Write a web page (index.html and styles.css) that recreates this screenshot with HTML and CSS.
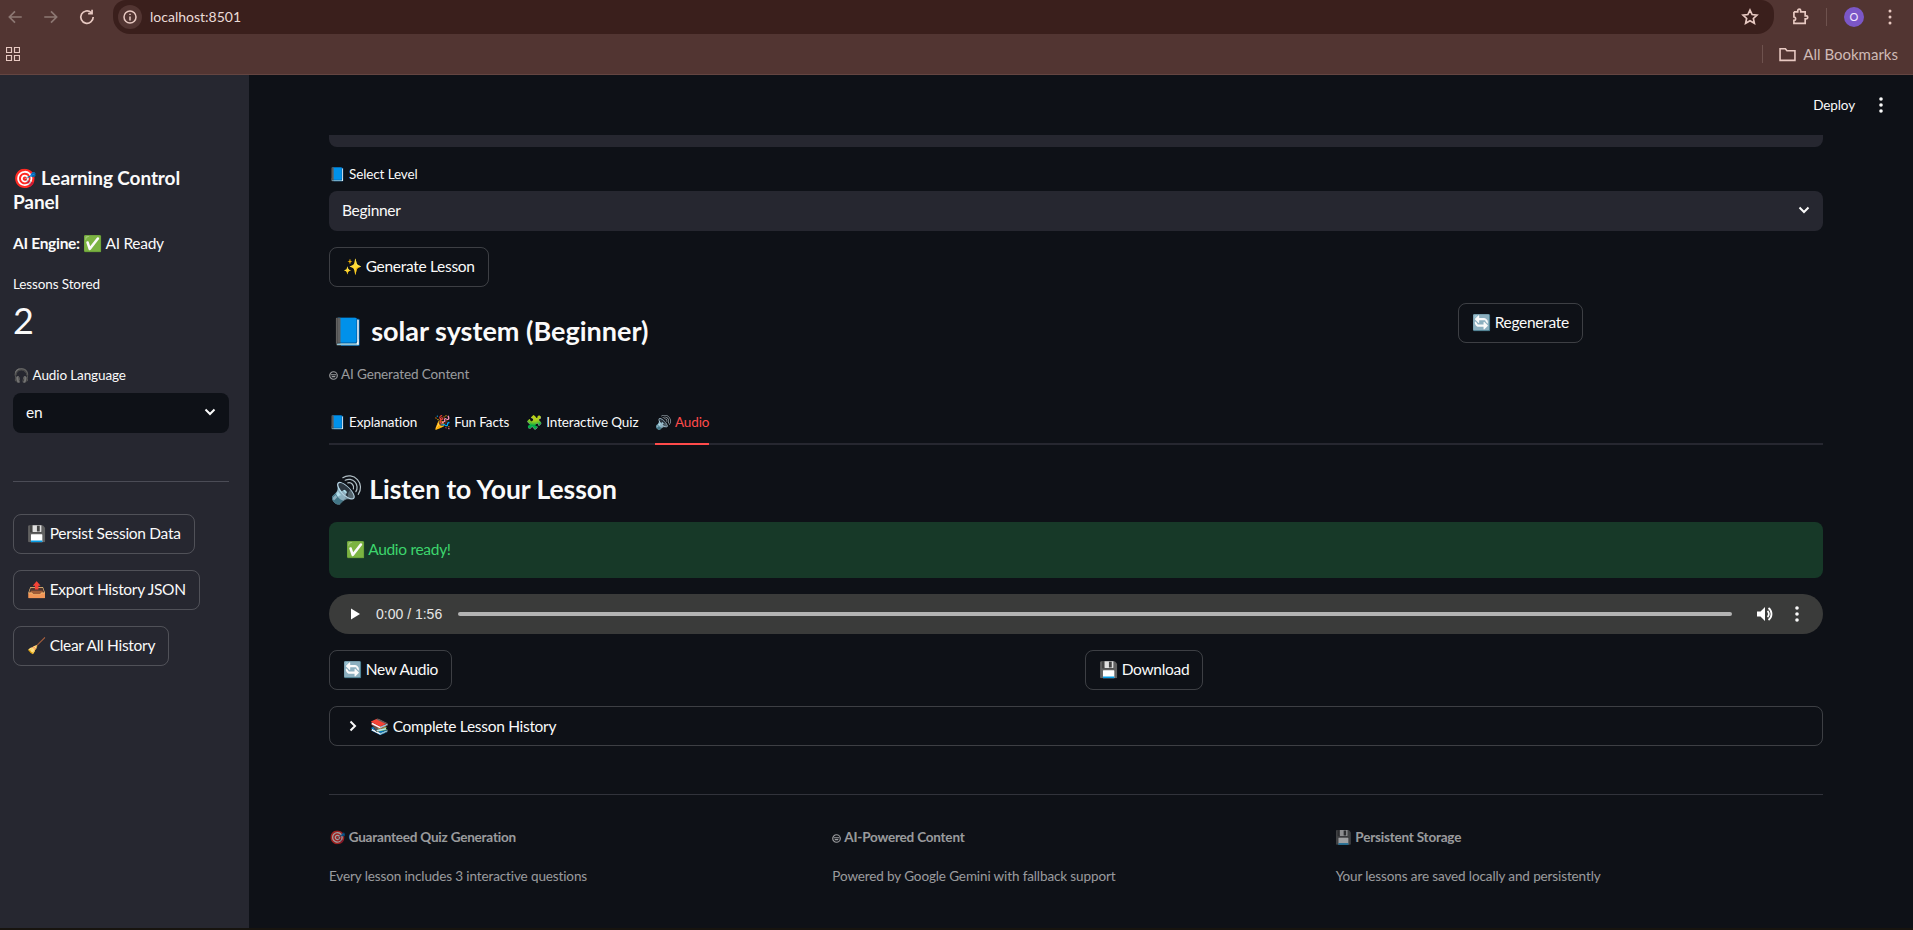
FILE: index.html
```html
<!DOCTYPE html>
<html lang="en">
<head>
<meta charset="utf-8">
<title>Learning Control Panel</title>
<link rel="stylesheet" href="styles.css">
</head>
<body>
<header class="toolbar">
  <div class="nav">
    <svg class="ic dim" viewBox="0 0 16 16"><path d="M14 8H3M8 3 3 8l5 5"/></svg>
    <svg class="ic dim" viewBox="0 0 16 16"><path d="M2 8h11M8 3l5 5-5 5"/></svg>
    <svg class="ic" viewBox="0 0 16 16"><path d="M13.500 8A5.500 5.500 0 1 1 11.700 4M12.500 1.500V5H9"/></svg>
  </div>
  <div class="omni">
    <span class="site"><svg class="ic" viewBox="0 0 16 16"><circle cx="8" cy="8" r="6"/><path d="M8 7.500V11.500M8 4.700v1.200"/></svg></span>
    <span class="url">localhost:8501</span>
    <svg class="ic star" viewBox="0 0 16 16"><path d="m8 1.800 1.900 4 4.300.5-3.200 3 .9 4.300L8 11.400l-3.900 2.200.9-4.300-3.200-3 4.300-.5z"/></svg>
  </div>
  <div class="tools">
    <svg class="ic" viewBox="0 0 16 16"><path d="M2.500 4H6V2.800a1.300 1.300 0 0 1 2.600 0V4h4v3.500h1a1.300 1.300 0 0 1 0 2.600h-1v4h-10v-2.600a1.500 1.500 0 0 0 0-3V4z" transform="translate(0 -.5)"/></svg>
    <i class="vsep"></i>
    <span class="avatar">O</span>
    <svg class="dots-c" viewBox="0 0 4 18"><circle cx="2" cy="3" r="1.500"/><circle cx="2" cy="9" r="1.500"/><circle cx="2" cy="15" r="1.500"/></svg>
  </div>
</header>
<nav class="bookmarks">
  <svg class="apps" viewBox="0 0 14 14"><path d="M.5.500h5v5h-5zM8.500.500h5v5h-5zM.5 8.500h5v5h-5zM8.500 8.500h5v5h-5z"/></svg>
  <i class="vsep bm"></i>
  <svg class="ic folder" viewBox="0 0 16 14"><path d="M1 2h5l1.500 2H15v9H1z"/></svg>
  <span class="bm-text">All Bookmarks</span>
</nav>
<div class="app">
  <aside class="sidebar">
    <h2 class="side-title">🎯 Learning Control Panel</h2>
    <p class="engine"><b>AI Engine:</b> ✅ AI Ready</p>
    <div class="metric-label">Lessons Stored</div>
    <div class="metric-value">2</div>
    <label class="side-label">🎧 Audio Language</label>
    <div class="select dark"><span>en</span><svg class="chev" viewBox="0 0 12 8"><path d="m1.500 1.500 4.500 4.500 4.500-4.500"/></svg></div>
    <hr class="side-hr">
    <button class="btn">💾 Persist Session Data</button>
    <button class="btn">📤 Export History JSON</button>
    <button class="btn">🧹 Clear All History</button>
  </aside>
  <main class="main">
    <div class="top-actions">
      <span class="deploy">Deploy</span>
      <svg class="dots-w" viewBox="0 0 4 18"><circle cx="2" cy="3" r="1.800"/><circle cx="2" cy="9" r="1.800"/><circle cx="2" cy="15" r="1.800"/></svg>
    </div>
    <div class="stub"></div>
    <label class="field-label">📘 Select Level</label>
    <div class="select"><span>Beginner</span><svg class="chev" viewBox="0 0 12 8"><path d="m1.500 1.500 4.500 4.500 4.500-4.500"/></svg></div>
    <button class="btn gen">✨ Generate Lesson</button>
    <div class="title-row">
      <h1 class="lesson">📘 solar system (Beginner)</h1>
      <button class="btn">🔄 Regenerate</button>
    </div>
    <p class="caption"><svg class="robot" viewBox="0 0 10 10"><circle cx="5" cy="5" r="4.200"/><path d="M2 4.200h6M3 6.200h4"/></svg>AI Generated Content</p>
    <div class="tabs">
      <span class="tab">📘 Explanation</span>
      <span class="tab">🎉 Fun Facts</span>
      <span class="tab">🧩 Interactive Quiz</span>
      <span class="tab active">🔊 Audio</span>
    </div>
    <h2 class="listen">🔊 Listen to Your Lesson</h2>
    <div class="alert">✅ Audio ready!</div>
    <div class="player">
      <svg class="play" viewBox="0 0 10 12"><path d="M0 0v12l10-6z"/></svg>
      <span class="time">0:00 / 1:56</span>
      <div class="track"></div>
      <svg class="vol" viewBox="0 0 18 18"><path class="fill" d="M1 6.500v5h3.500L9 16V2L4.500 6.500z"/><path class="line" d="M11.500 6a4 4 0 0 1 0 6M12.500 3a7.500 7.500 0 0 1 0 12"/></svg>
      <svg class="dots-w" viewBox="0 0 4 18"><circle cx="2" cy="3" r="1.800"/><circle cx="2" cy="9" r="1.800"/><circle cx="2" cy="15" r="1.800"/></svg>
    </div>
    <div class="audio-actions">
      <div><button class="btn">🔄 New Audio</button></div>
      <div><button class="btn">💾 Download</button></div>
    </div>
    <div class="expander">
      <svg class="chev-r" viewBox="0 0 8 12"><path d="m1.500 1.500 4.500 4.500-4.500 4.500"/></svg>
      <span>📚 Complete Lesson History</span>
    </div>
    <hr class="main-hr">
    <div class="features">
      <section><h4>🎯 Guaranteed Quiz Generation</h4><p>Every lesson includes 3 interactive questions</p></section>
      <section><h4><svg class="robot" viewBox="0 0 10 10"><circle cx="5" cy="5" r="4.200"/><path d="M2 4.200h6M3 6.200h4"/></svg>AI-Powered Content</h4><p>Powered by Google Gemini with fallback support</p></section>
      <section><h4>💾 Persistent Storage</h4><p>Your lessons are saved locally and persistently</p></section>
    </div>
  </main>
</div>
<div class="strip"></div>
</body>
</html>
```
FILE: styles.css
```css
* { box-sizing: border-box; }
html, body { margin: 0; height: 930px; overflow: hidden; }
body {
  background: #0e1117;
  color: #fafafa;
  font-family: "Lato", "Noto Color Emoji", "Noto Sans", sans-serif;
  font-size: 15.500px;
  letter-spacing: -.3px;
  line-height: 20px;
}
h1, h2, h4, p { margin: 0; }
hr { border: 0; margin: 0; }

.ic { fill: none; stroke: #e8c9c2; stroke-width: 1.500; width: 18px; height: 18px; flex: none; }
.ic.dim { stroke: #8d7873; }
.toolbar { height: 34px; background: #523532; display: flex; align-items: center; letter-spacing: 0; }
.nav { width: 113px; display: flex; gap: 18px; padding-left: 6px; }
.omni { width: 1661px; height: 34px; background: #3a1f1c; border-radius: 13px 13px 17px 17px; display: flex; align-items: center; padding: 0 15px 0 5px; }
.site { width: 24px; height: 24px; border-radius: 50%; background: #523532; display: flex; align-items: center; justify-content: center; }
.site .ic { width: 16px; height: 16px; }
.url { margin-left: 8px; flex: 1; font-size: 14px; color: #eadbd8; }
.tools { flex: 1; display: flex; align-items: center; padding-left: 17px; }
.vsep { width: 1px; height: 18px; background: #6e524e; margin-left: 17px; display: block; }
.avatar { width: 20px; height: 20px; border-radius: 50%; background: #7b57c7; color: #f3e9ff; font-size: 11px; display: flex; align-items: center; justify-content: center; margin-left: 17px; }
.dots-c { width: 4px; height: 18px; fill: #e8c9c2; margin-left: 24px; }
.bookmarks { height: 41px; background: #523532; border-bottom: 1px solid #644541; display: flex; align-items: center; padding: 0 15px 0 6px; letter-spacing: 0; }
.apps { width: 14px; height: 14px; fill: none; stroke: #e8c9c2; stroke-width: 1.200; }
.vsep.bm { margin-left: auto; height: 18px; }
.folder { margin-left: 16px; width: 17px; }
.bm-text { margin-left: 7px; font-size: 15px; color: #cfbab6; }

.app { display: flex; height: 853px; }
.strip { height: 2px; background: #17140f; }
.sidebar { width: 249px; flex: none; background: #262730; padding: 91px 20px 0 13px; display: flex; flex-direction: column; align-items: stretch; }
.side-title { font-size: 19px; line-height: 24px; font-weight: 700; letter-spacing: -.1px; }
.engine { margin-top: 18px; margin-bottom: 1px; line-height: 22px; }
.metric-label { margin-top: 19px; font-size: 13.500px; letter-spacing: -.12px; }
.metric-value { margin-top: 4px; font-size: 36px; line-height: 44px; letter-spacing: 0; }
.side-label { margin-top: 23px; margin-bottom: 1px; font-size: 13.500px; letter-spacing: -.12px; }
.select { margin-top: 7px; height: 40px; background: #262730; border-radius: 8px; display: flex; align-items: center; justify-content: space-between; padding: 0 13px 2px; }
.select.dark { background: #0e1117; }
.chev { width: 12px; height: 8px; fill: none; stroke: #fafafa; stroke-width: 2; }
.side-hr { margin-top: 48px; height: 1px; background: #4b4c56; }
.btn { height: 40px; padding: 0 13px 2px; border: 1px solid rgba(250,250,250,.2); border-radius: 8px; background: transparent; color: #fafafa; font: inherit; letter-spacing: inherit; align-self: flex-start; justify-self: start; white-space: nowrap; }
.sidebar .btn { margin-bottom: 16px; }
.side-hr + .btn { margin-top: 32px; }

.main { flex: 1; padding: 20px 90px 0 80px; display: flex; flex-direction: column; align-items: stretch; min-width: 0; }
.top-actions { height: 20px; display: flex; align-items: center; justify-content: flex-end; margin-right: -60px; gap: 24px; }
.deploy { font-size: 13.500px; letter-spacing: -.12px; }
.dots-w { width: 4px; height: 18px; fill: #fafafa; flex: none; }
.stub { margin-top: 20px; height: 12px; background: #262730; border-radius: 0 0 8px 8px; }
.field-label { margin-top: 17px; font-size: 13.500px; letter-spacing: -.12px; }
.gen { margin-top: 16px; }
.title-row { margin-top: 16px; height: 49px; display: grid; grid-template-columns: 1113px 1fr; gap: 16px; align-items: start; }
.lesson { margin-top: 8px; font-size: 27px; line-height: 40px; font-weight: 700; letter-spacing: 0; padding-left: 2px; }
.robot { width: 9px; height: 9px; margin-right: 3px; fill: none; stroke: currentColor; stroke-width: 1.300; vertical-align: -1px; }
.caption { margin-top: 12px; font-size: 13.500px; letter-spacing: -.12px; color: rgba(250,250,250,.6); }
.tabs { margin-top: 20px; height: 41px; display: flex; gap: 17px; border-bottom: 2px solid #262730; font-size: 13.500px; letter-spacing: -.12px; }
.tab { height: 41px; padding-top: 8px; }
.tab.active { color: #ff4b4b; border-bottom: 2px solid #ff4b4b; }
.listen { margin-top: 24px; height: 41px; font-size: 26.500px; line-height: 40px; font-weight: 700; letter-spacing: -.05px; padding-left: 1px; }
.alert { margin-top: 12px; height: 56px; background: #173928; color: #3dd56d; border-radius: 8px; display: flex; align-items: center; padding: 0 17px 2px; }
.player { margin-top: 16px; height: 40px; border-radius: 20px; background: #3a3b3a; display: flex; align-items: center; padding-left: 22px; padding-right: 24px; letter-spacing: 0; }
.play { width: 9px; height: 12px; fill: #fff; flex: none; }
.time { margin-left: 16px; font: 14px "Liberation Sans", sans-serif; color: #e6e6e6; }
.track { flex: 1; height: 4px; margin: 0 24px 0 16px; background: #b3b3b3; border-radius: 2px; }
.vol { width: 18px; height: 18px; flex: none; margin-right: 21px; }
.vol .fill { fill: #fff; }
.vol .line { fill: none; stroke: #fff; stroke-width: 1.800; }
.audio-actions { margin-top: 16px; display: grid; grid-template-columns: 740px 1fr; gap: 16px; }
.expander { margin-top: 16px; height: 40px; border: 1px solid rgba(250,250,250,.2); border-radius: 8px; display: flex; align-items: center; padding-left: 19px; gap: 13px; }
.chev-r { width: 8px; height: 12px; fill: none; stroke: #fafafa; stroke-width: 2; }
.main-hr { margin-top: 48px; height: 1px; background: #31333b; }
.features { margin-top: 32px; display: grid; grid-template-columns: repeat(3, 1fr); gap: 16px; font-size: 13.500px; letter-spacing: -.12px; color: rgba(250,250,250,.6); }
.features h4 { font-size: inherit; font-weight: 700; letter-spacing: -.2px; }
.features p { margin-top: 19px; }
```
